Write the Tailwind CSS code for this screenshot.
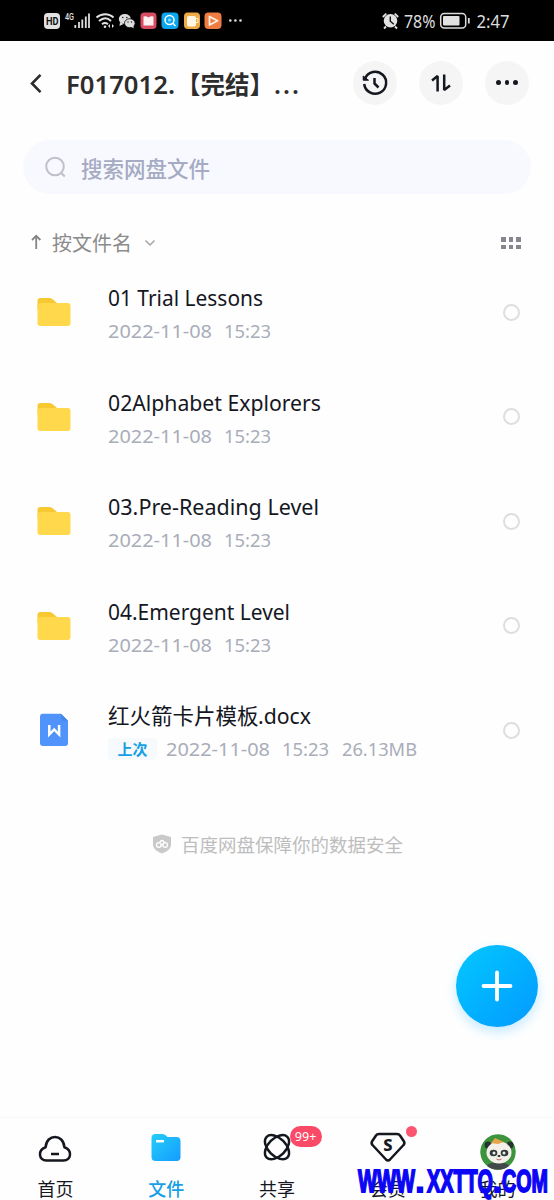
<!DOCTYPE html>
<html lang="zh-CN">
<head>
<meta charset="utf-8">
<title>文件</title>
<script src="https://cdn.jsdelivr.net/npm/@tailwindcss/browser@4"></script>
</head>
<body class="bg-white">
<div class="relative flex h-[1200px] w-[554px] flex-col overflow-hidden bg-[#fefefe] font-['Noto_Sans','Noto_Sans_CJK_SC',sans-serif] text-[#15171f]">

  <!-- status bar -->
  <header class="flex h-[41px] shrink-0 items-center justify-between bg-black pl-11 pr-[43px] text-[#e5e5e5]">
    <svg class="h-[41px] w-[200px]" viewBox="44 0 200 41" fill="none">
      <rect x="44" y="13" width="16" height="16" rx="4" fill="#e2e2e2"/>
      <text x="46" y="25.3" font-family="Roboto" font-weight="700" font-size="10.5" textLength="12.5" lengthAdjust="spacingAndGlyphs" fill="#111">HD</text>
      <text x="65" y="19.5" font-family="Roboto" font-weight="500" font-size="8.5" textLength="9" lengthAdjust="spacingAndGlyphs" fill="#e2e2e2">4G</text>
      <path d="M75.3 25v3M79 22v6M82.3 19.500v8.500M85.800 16.500v11.500M89 13.500v14.500" stroke="#ddd" stroke-width="1.800"/>
      <path d="M96.500 17.500c5-4.500 12.500-4.500 17 0M99 21c4-3.500 8.500-3.500 12 0M102 24.200c2-1.500 4-1.500 6 0" stroke="#e2e2e2" stroke-width="2"/>
      <circle cx="105" cy="26.800" r="1.300" fill="#e2e2e2"/>
      <path d="M110 24l-2 2 2 2zM112 24l2 2-2 2z" fill="#e2e2e2"/>
      <ellipse cx="124.800" cy="19" rx="6" ry="5" fill="#ddd"/><path d="M120 22l-.5 4 4-2z" fill="#ddd"/>
      <ellipse cx="129.800" cy="23.200" rx="5.300" ry="4.500" fill="#ddd" stroke="#000" stroke-width=".8"/>
      <path d="M131 26.500l2.500 2v-3z" fill="#ddd"/>
      <g fill="#222"><circle cx="122.800" cy="17.500" r=".8"/><circle cx="126.800" cy="17.500" r=".8"/><circle cx="128" cy="22" r=".7"/><circle cx="131.500" cy="22" r=".7"/></g>
      <rect x="140.500" y="12.500" width="16" height="16.500" rx="4" fill="#d94d63"/>
      <path d="M143.500 16.500q2.500-1 5 1q2.500-2 5-1v9h-10z" fill="#fff0f1"/>
      <rect x="161.500" y="12.500" width="17" height="16.500" rx="4" fill="#0ca6ee"/>
      <circle cx="169.500" cy="20" r="4.500" stroke="#fff" stroke-width="1.500"/><circle cx="169.500" cy="20" r="1.500" fill="#8ddcff"/><path d="M172.800 23.300l2.700 2.700" stroke="#fff" stroke-width="1.500"/>
      <rect x="184" y="12.500" width="16" height="16.500" rx="4" fill="#efac46"/>
      <rect x="187" y="16" width="9" height="10.500" rx="2" fill="#fff7e4"/><path d="M196 18.500h2v4h-2" stroke="#fff7e4"/>
      <rect x="204.500" y="12.500" width="17" height="16.500" rx="4" fill="#ee7c43"/>
      <path d="M209.500 16.500v8.500l8-4.200z" stroke="#fff1df" stroke-width="1.800" stroke-linejoin="round"/>
      <g fill="#ddd"><circle cx="230.300" cy="20.500" r="1.300"/><circle cx="235.400" cy="20.500" r="1.300"/><circle cx="240.500" cy="20.500" r="1.300"/></g>
    </svg>
    <svg class="h-[41px] w-[129px]" viewBox="382 0 129 41" fill="none">
      <circle cx="390.500" cy="20.800" r="6.800" fill="#e2e2e2"/>
      <path d="M382.800 17l3.500-3.300M394.700 13.700l3.500 3.300M386 26.500l-2 2M395 26.500l2 2" stroke="#e2e2e2" stroke-width="1.800"/>
      <path d="M390.300 16.500v4.700l3.500 3" stroke="#111" stroke-width="1.400"/>
      <text x="404" y="27.500" font-family="Noto Sans" font-size="18" textLength="31.500" lengthAdjust="spacingAndGlyphs" fill="#dcdcdc">78%</text>
      <rect x="440.700" y="13.500" width="25" height="14.500" rx="3.500" stroke="#dcdcdc" stroke-width="1.500"/>
      <rect x="443" y="16" width="16.500" height="9.500" rx="1" fill="#e2e2e2"/>
      <path d="M468.800 18v5.500" stroke="#dcdcdc" stroke-width="1.800"/>
      <text x="476.500" y="27.500" font-family="Noto Sans" font-size="18" textLength="33" lengthAdjust="spacingAndGlyphs" fill="#dcdcdc">2:47</text>
    </svg>
  </header>

  <!-- title bar -->
  <div class="flex h-[84px] shrink-0 items-center pl-[29px] pr-[25px]">
    <svg class="h-6 w-4" viewBox="0 0 16 24" fill="none"><path d="M11.500 3.800L3 12.500l8.500 8.700" stroke="#2b2b2b" stroke-width="2.600"/></svg>
    <svg class="ml-[19px] h-10 w-[240px]" viewBox="64 63 240 40" fill="#2d2d2d" font-family="'Noto Sans','Noto Sans CJK SC',sans-serif" font-weight="600" font-size="25">
      <text y="93.500"><tspan x="66" textLength="109" lengthAdjust="spacingAndGlyphs">F017012.</tspan><tspan x="176" font-family="Noto Sans CJK SC" font-weight="700" font-size="24.500">【完结】</tspan><tspan x="274" textLength="25">...</tspan></text>
    </svg>
    <div class="ml-auto flex gap-[22px] pb-px">
      <span class="flex size-11 items-center justify-center rounded-full bg-[#f5f5f6]">
        <svg class="size-7" viewBox="0 0 28 28" fill="none" stroke="#15171f" stroke-width="2.500"><path d="M4 9.500A11 11 0 1 1 3.200 15"/><path d="M2.200 7v4.200h5.300z" fill="#15171f" stroke-width="1"/><path d="M13.500 9v5.500l4 4" stroke-linejoin="round"/></svg>
      </span>
      <span class="flex size-11 items-center justify-center rounded-full bg-[#f5f5f6]">
        <svg class="size-7" viewBox="0 0 28 28" fill="none" stroke="#15171f" stroke-width="2.500"><path d="M5 11.500l5.600-4.400V22.500M17.200 5.500V21l5.800-4.500" stroke-linejoin="bevel"/></svg>
      </span>
      <span class="flex size-11 items-center justify-center gap-1 rounded-full bg-[#f5f5f6]">
        <i class="size-[4.500px] rounded-full bg-[#15171f]"></i><i class="size-[4.500px] rounded-full bg-[#15171f]"></i><i class="size-[4.500px] rounded-full bg-[#15171f]"></i>
      </span>
    </div>
  </div>

  <!-- search -->
  <div class="mx-[23px] mt-[15px] flex h-[54px] shrink-0 items-center rounded-full bg-[#f8f9fe] pl-[21px]">
    <svg class="size-6" viewBox="0 0 24 24" fill="none" stroke="#bfc0c9" stroke-width="2"><circle cx="11" cy="11.500" r="8.800"/><path d="M17.300 18l3.500 3.500"/></svg>
    <span class="ml-[13px] pt-px font-['Noto_Sans_CJK_SC'] text-[21.500px] font-medium leading-8 text-[#a5abc3]">搜索网盘文件</span>
  </div>

  <!-- sort -->
  <div class="mt-[29px] flex h-[37px] shrink-0 items-center justify-between pl-[30px] pr-[33px] pt-[3px]">
    <div class="flex items-center">
      <svg class="h-5 w-3" viewBox="0 0 12 20" fill="none" stroke="#858585" stroke-width="1.800"><path d="M6.200 16V3M2 7l4.200-4.200L10.400 7"/></svg>
      <span class="ml-2.5 font-['Noto_Sans_CJK_SC'] text-[20px] leading-8 text-[#8b8b8b]">按文件名</span>
      <svg class="ml-3 h-3 w-3" viewBox="0 0 12 12" fill="none" stroke="#a4a4a4" stroke-width="1.500"><path d="M1.500 3.500L6 8l4.500-4.500"/></svg>
    </div>
    <div class="grid grid-cols-3 gap-x-[3px] gap-y-[3px]">
      <i class="size-[4.600px] bg-[#86868e]"></i><i class="size-[4.600px] bg-[#86868e]"></i><i class="size-[4.600px] bg-[#86868e]"></i>
      <i class="size-[4.600px] bg-[#86868e]"></i><i class="size-[4.600px] bg-[#86868e]"></i><i class="size-[4.600px] bg-[#86868e]"></i>
    </div>
  </div>

  <!-- files -->
  <svg class="hidden"><defs>
    <symbol id="folder" viewBox="0 0 34 30"><path d="M.5 12V4q0-3 3-3h9q2 0 3.500 1.500L20 6z" fill="#f8c832"/><path d="M0.500 9q0-3 3-3H30.500q3 0 3 3V26q0 3-3 3H3.500q-3 0-3-3z" fill="#ffd84c"/></symbol>
  </defs></svg>
  <ul class="-mt-[0.200px] shrink-0">
    <li class="flex h-[104.600px] items-center pl-[37px] pr-[34px]">
      <svg class="h-[30px] w-[34px]"><use href="#folder"/></svg>
      <svg class="ml-[35px] h-[60px] w-[340px]" viewBox="106 282 340 60" font-family="'Noto Sans',sans-serif"><text x="108" y="306" font-size="21" textLength="155" lengthAdjust="spacingAndGlyphs" fill="#15171f">01 Trial Lessons</text><text y="338" font-size="18.500" fill="#a9adb9"><tspan x="108" textLength="104" lengthAdjust="spacingAndGlyphs">2022-11-08</tspan><tspan x="224" textLength="47" lengthAdjust="spacingAndGlyphs">15:23</tspan></text></svg>
      <i class="ml-auto size-[17px] rounded-full border-2 border-[#dedede]"></i>
    </li>
    <li class="flex h-[104.600px] items-center pl-[37px] pr-[34px]">
      <svg class="h-[30px] w-[34px]"><use href="#folder"/></svg>
      <svg class="ml-[35px] h-[60px] w-[340px]" viewBox="106 282 340 60" font-family="'Noto Sans',sans-serif"><text x="108" y="306" font-size="21" textLength="213" lengthAdjust="spacingAndGlyphs" fill="#15171f">02Alphabet Explorers</text><text y="338" font-size="18.500" fill="#a9adb9"><tspan x="108" textLength="104" lengthAdjust="spacingAndGlyphs">2022-11-08</tspan><tspan x="224" textLength="47" lengthAdjust="spacingAndGlyphs">15:23</tspan></text></svg>
      <i class="ml-auto size-[17px] rounded-full border-2 border-[#dedede]"></i>
    </li>
    <li class="flex h-[104.600px] items-center pl-[37px] pr-[34px]">
      <svg class="h-[30px] w-[34px]"><use href="#folder"/></svg>
      <svg class="ml-[35px] h-[60px] w-[340px]" viewBox="106 282 340 60" font-family="'Noto Sans',sans-serif"><text x="108" y="306" font-size="21" textLength="211" lengthAdjust="spacingAndGlyphs" fill="#15171f">03.Pre-Reading Level</text><text y="338" font-size="18.500" fill="#a9adb9"><tspan x="108" textLength="104" lengthAdjust="spacingAndGlyphs">2022-11-08</tspan><tspan x="224" textLength="47" lengthAdjust="spacingAndGlyphs">15:23</tspan></text></svg>
      <i class="ml-auto size-[17px] rounded-full border-2 border-[#dedede]"></i>
    </li>
    <li class="flex h-[104.600px] items-center pl-[37px] pr-[34px]">
      <svg class="h-[30px] w-[34px]"><use href="#folder"/></svg>
      <svg class="ml-[35px] h-[60px] w-[340px]" viewBox="106 282 340 60" font-family="'Noto Sans',sans-serif"><text x="108" y="306" font-size="21" textLength="182" lengthAdjust="spacingAndGlyphs" fill="#15171f">04.Emergent Level</text><text y="338" font-size="18.500" fill="#a9adb9"><tspan x="108" textLength="104" lengthAdjust="spacingAndGlyphs">2022-11-08</tspan><tspan x="224" textLength="47" lengthAdjust="spacingAndGlyphs">15:23</tspan></text></svg>
      <i class="ml-auto size-[17px] rounded-full border-2 border-[#dedede]"></i>
    </li>
    <li class="flex h-[104.600px] items-center pl-[37px] pr-[34px]">
      <svg class="h-[34px] w-[34px]" viewBox="0 0 34 34" fill="none"><path d="M6 .8H24l7 7V30q0 3-3 3H6q-3 0-3-3V3.800q0-3 3-3z" fill="#4f93fb"/><path d="M24 .8v4q0 3 3 3h4z" fill="#4388ee"/><path d="M12.300 12v9.500l4.900-5 4.900 5v-9.500" stroke="#fff" stroke-width="2.500"/></svg>
      <svg class="ml-[35px] h-[60px] w-[340px]" viewBox="106 282 340 60" font-family="'Noto Sans',sans-serif">
        <text y="306" fill="#15171f"><tspan x="108" font-family="Noto Sans CJK SC" font-size="21.500">红火箭卡片模板</tspan><tspan x="258" font-size="21" textLength="53" lengthAdjust="spacingAndGlyphs">.docx</tspan></text>
        <rect x="108" y="320" width="49" height="22" rx="4" fill="#f7fafc"/>
        <text x="117.500" y="337" font-family="Noto Sans CJK SC" font-weight="700" font-size="15" fill="#159fe5">上次</text>
        <text y="338" font-size="18.500" fill="#a9adb9"><tspan x="166" textLength="104" lengthAdjust="spacingAndGlyphs">2022-11-08</tspan><tspan x="282" textLength="47" lengthAdjust="spacingAndGlyphs">15:23</tspan><tspan x="342" textLength="75" lengthAdjust="spacingAndGlyphs">26.13MB</tspan></text>
      </svg>
      <i class="ml-auto size-[17px] rounded-full border-2 border-[#dedede]"></i>
    </li>
  </ul>

  <div class="mt-[46px] flex h-8 shrink-0 items-center justify-center gap-[9px] pb-0.5 pl-px">
    <svg class="h-5 w-5" viewBox="0 0 20 20" fill="none"><path d="M10 .5l9 2.500v8q0 5-9 8.500-9-3.500-9-8.500V3z" fill="#c9c9c9"/><g stroke="#fff" stroke-width="1.300"><circle cx="6.800" cy="11" r="2.300"/><circle cx="13.200" cy="11" r="2.300"/><path d="M7.500 8.500q2.500-4 5 0M8.500 12.500l3-3"/></g></svg>
    <span class="font-['Noto_Sans_CJK_SC'] text-[18.500px] leading-8 text-[#bdbdbd]">百度网盘保障你的数据安全</span>
  </div>

  <!-- add button floats above the list -->
  <button class="absolute left-[456px] top-[945px] flex size-[82px] items-center justify-center rounded-full bg-linear-to-br from-[#08c8ff] to-[#0899ff] shadow-[0_5px_12px_#c5eaff]">
    <svg class="size-8" viewBox="0 0 32 32"><path d="M16 2.500v27M2.500 16h27" stroke="#fff" stroke-width="3.800" stroke-linecap="round"/></svg>
  </button>

  <!-- tab bar -->
  <nav class="mt-auto grid h-[83px] shrink-0 grid-cols-5 border-t border-[#f8f8f8] font-['Noto_Sans_CJK_SC'] text-[18px] leading-6">
    <div class="flex flex-col items-center pt-3.5">
      <svg class="h-9 w-9" viewBox="0 0 36 36" fill="none" stroke="#15171f" stroke-width="2.500"><path d="M9.500 28.500C1.500 28.500 .5 18 8.600 15.200C9.500 1.500 26.500 1.500 27.400 15.200C35.500 18 34.500 28.500 26.500 28.500z" stroke-linejoin="round"/><path d="M14 22h8"/></svg>
      <span class="mt-2">首页</span>
    </div>
    <div class="flex flex-col items-center pt-3.5 font-medium text-[#169fe5]">
      <svg class="h-9 w-9" viewBox="0 0 36 36" fill="none"><defs><linearGradient id="tab" x1="0" y1="0" x2="1" y2="1"><stop stop-color="#25cdf8"/><stop offset="1" stop-color="#159cff"/></linearGradient></defs><path d="M3.500 6q0-4 4-4h7q2 0 3.500 1.500L19.500 5h9q4 0 4 4v16q0 4-4 4H7.500q-4 0-4-4z" fill="url(#tab)"/><path d="M8 9.200h8" stroke="#fff" stroke-width="2.500"/></svg>
      <span class="mt-2">文件</span>
    </div>
    <div class="relative flex flex-col items-center pt-3.5">
      <svg class="h-9 w-9" viewBox="0 0 36 36" fill="none" stroke="#15171f" stroke-width="2.500"><ellipse cx="18" cy="15.200" rx="8.800" ry="14.600" transform="rotate(45 18 15.200)"/><ellipse cx="18" cy="15.200" rx="8.800" ry="14.600" transform="rotate(-45 18 15.200)"/></svg>
      <span class="mt-2">共享</span>
      <b class="absolute left-[68px] top-2 flex h-[21px] w-8 items-center justify-center rounded-full bg-[#fb4a68] font-['Noto_Sans'] text-[12.500px] font-normal text-white">99+</b>
    </div>
    <div class="relative flex flex-col items-center pt-3.5">
      <svg class="h-9 w-[38px]" viewBox="0 0 38 36" fill="none"><path d="M10 2H28q2 0 3 1.500l4 6q1 2-.5 3.500L21 27.500q-2 2-4 0L3.500 13Q2 11.500 3 9.500l4-6Q8 2 10 2z" stroke="#15171f" stroke-width="2.500"/><text x="19" y="19" text-anchor="middle" font-family="Noto Sans" font-weight="800" font-size="16.500" fill="#15171f">S</text></svg>
      <span class="mt-2">会员</span>
      <i class="absolute left-[74px] top-2 size-[11px] rounded-full bg-[#fb5570]"></i>
    </div>
    <div class="flex flex-col items-center pr-0.5 pt-4">
      <svg class="h-9 w-9" viewBox="0 0 36 36"><defs><clipPath id="face"><circle cx="18" cy="18" r="17.800"/></clipPath></defs><g clip-path="url(#face)"><circle cx="18" cy="18" r="18" fill="#3d943c"/><ellipse cx="18" cy="34" rx="12" ry="6" fill="#42494b"/><circle cx="8" cy="11" r="3.500" fill="#263330"/><circle cx="30" cy="11" r="3.500" fill="#263330"/><ellipse cx="19" cy="18.500" rx="12.500" ry="11" fill="#f3f0e9"/><path d="M11 9l4-5 9 4-6 2z" fill="#e8a548"/><ellipse cx="13.500" cy="19" rx="3.800" ry="3.300" fill="#333a3a"/><ellipse cx="24.500" cy="19" rx="3.800" ry="3.300" fill="#333a3a"/><circle cx="14" cy="19" r="1.500" fill="#eee"/><circle cx="24" cy="19" r="1.500" fill="#eee"/><ellipse cx="19" cy="22" rx="1.500" ry="1" fill="#222"/><path d="M16.500 25q2.500 2 5 0" stroke="#b66" fill="none"/></g></svg>
      <span class="mt-1.5">我的</span>
    </div>
  </nav>

  <!-- site mark overlays the tab bar -->
  <svg class="absolute left-[350px] top-[1160px] h-10 w-[204px] overflow-visible" viewBox="350 1160 204 40" fill="#0b06f5" stroke="#0b06f5" stroke-width="1.800" font-family="'Liberation Sans Narrow','Liberation Sans'" font-weight="700" font-size="32">
    <text y="1192"><tspan x="358" textLength="57" lengthAdjust="spacingAndGlyphs">WWW</tspan><tspan x="415.500">.</tspan></text>
    <text x="427" y="1192" textLength="66" lengthAdjust="spacingAndGlyphs">XXTTQ</text>
    <text y="1192"><tspan x="493">.</tspan><tspan x="502" textLength="46" lengthAdjust="spacingAndGlyphs">COM</tspan></text>
  </svg>
</div>
</body>
</html>
